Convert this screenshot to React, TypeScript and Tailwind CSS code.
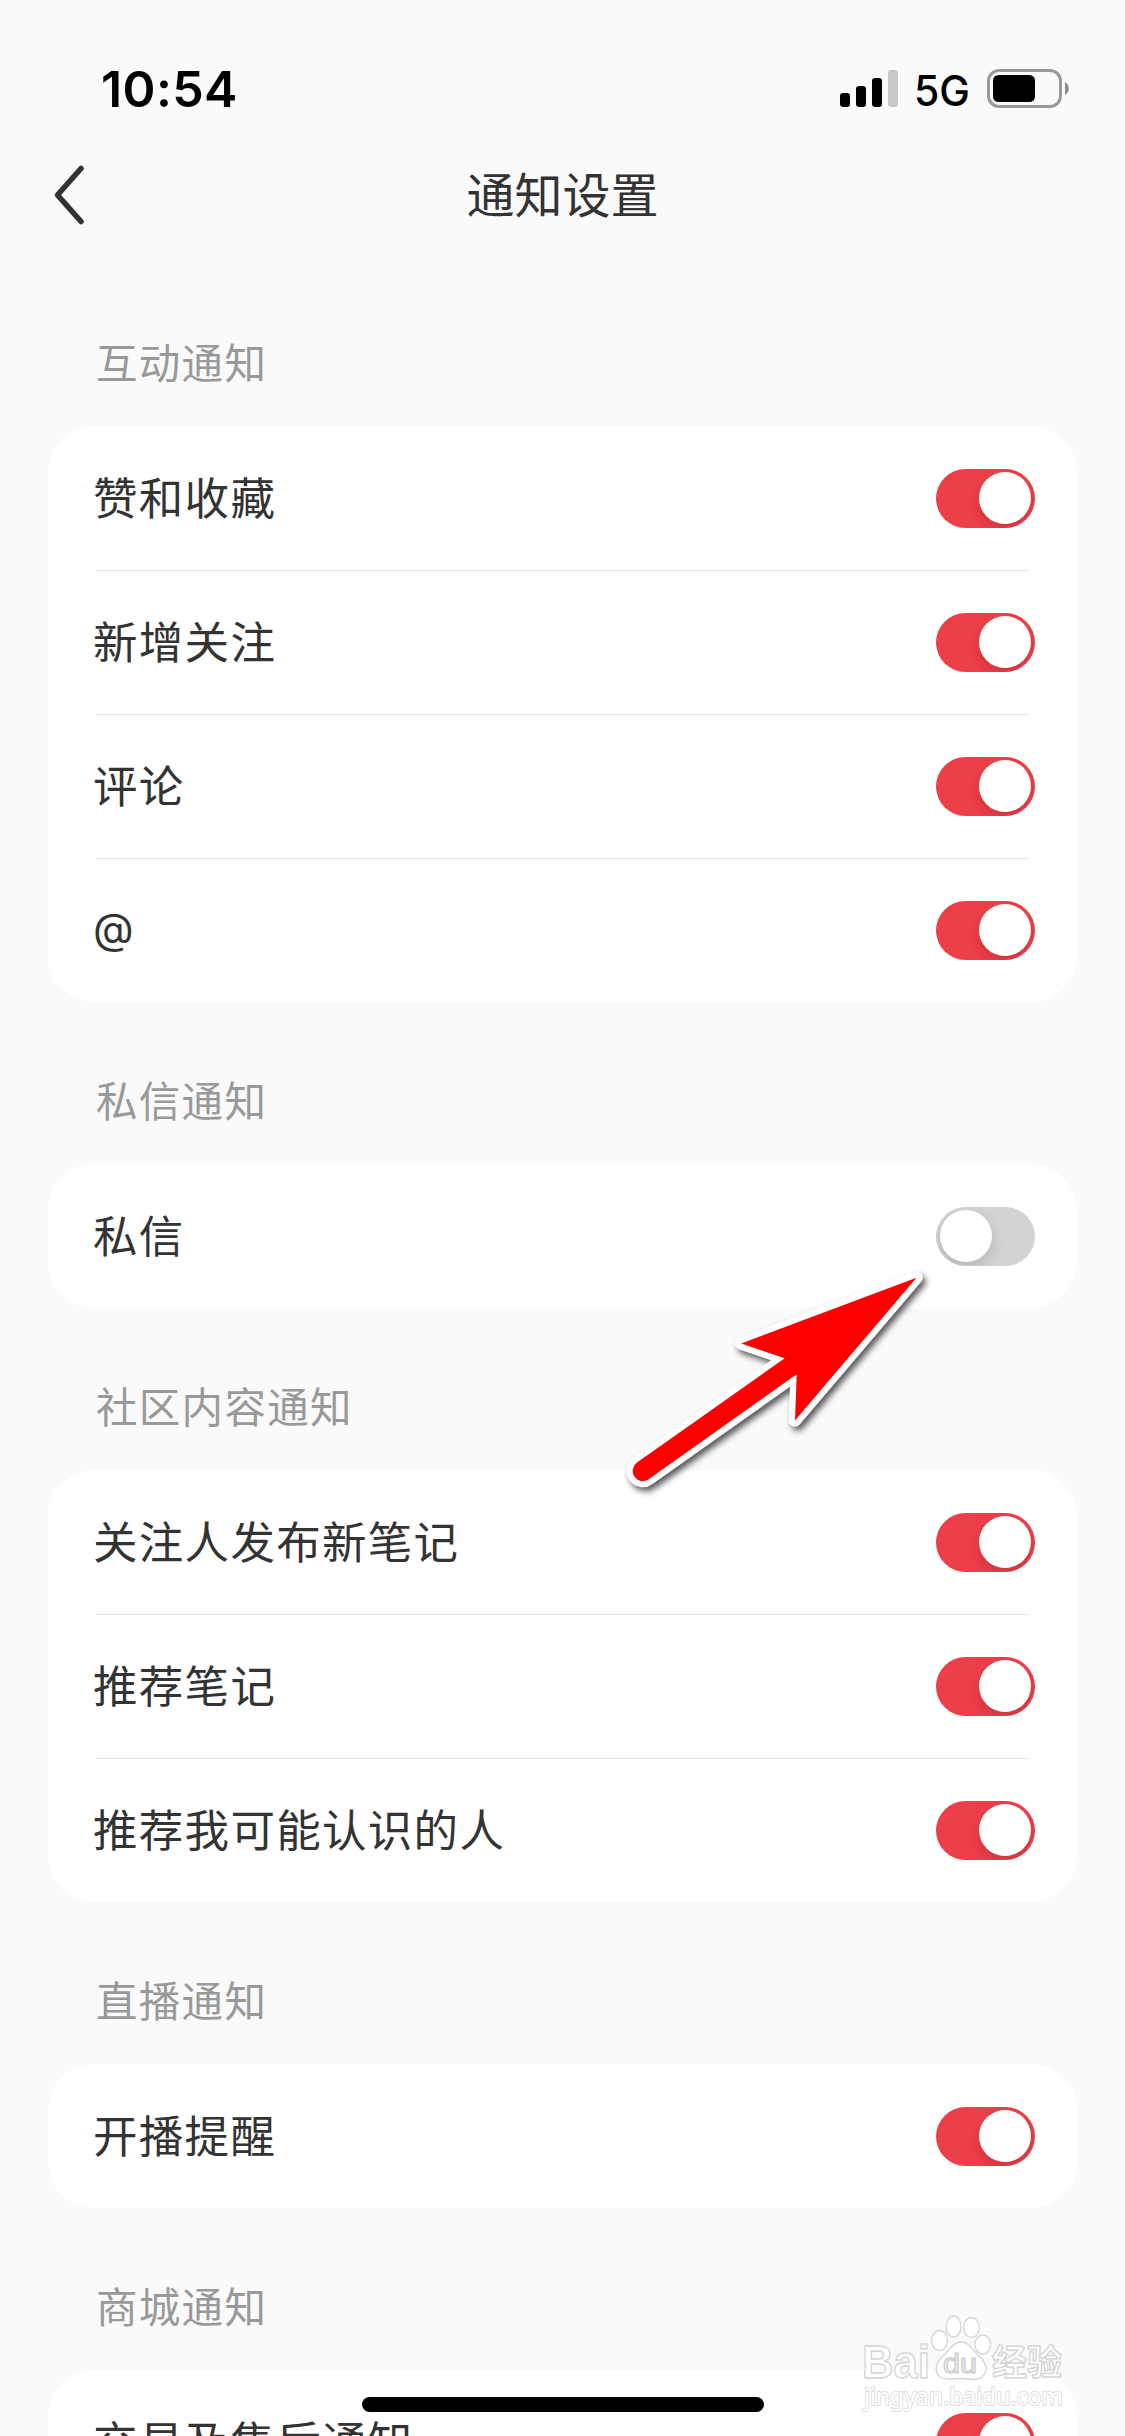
type Item = { label: string; on: boolean };
type Section = { title: string; items: Item[] };

const sections: Section[] = [
  {
    title: "互动通知",
    items: [
      { label: "赞和收藏", on: true },
      { label: "新增关注", on: true },
      { label: "评论", on: true },
      { label: "@", on: true },
    ],
  },
  { title: "私信通知", items: [{ label: "私信", on: false }] },
  {
    title: "社区内容通知",
    items: [
      { label: "关注人发布新笔记", on: true },
      { label: "推荐笔记", on: true },
      { label: "推荐我可能认识的人", on: true },
    ],
  },
  { title: "直播通知", items: [{ label: "开播提醒", on: true }] },
  { title: "商城通知", items: [{ label: "交易及售后通知", on: true }] },
];

function StatusBar() {
  return (
    <header className="flex h-[132px] items-start justify-between pl-[101px] pr-[54px] pt-[57px]">
      <span className="font-['Inter'] text-[50px] font-semibold leading-[64px] tracking-[0.4px] text-black">
        10:54
      </span>
      <div className="flex items-start pt-[12px]">
        <svg width="58" height="39" viewBox="0 0 58 39" className="mr-[14px]">
          <rect x="0" y="24" width="10" height="14" rx="3.2" fill="#000" />
          <rect x="16" y="17" width="10" height="21" rx="3.2" fill="#000" />
          <rect x="32" y="9" width="10" height="29" rx="3.2" fill="#000" />
          <rect x="48" y="1" width="10" height="37" rx="3.2" fill="#c8c8c8" />
        </svg>
        <svg width="60" height="39" viewBox="-3 0 60 39" className="mr-[15px] overflow-visible">
          <text
            x="-1"
            y="36.500"
            fontFamily="Inter, sans-serif"
            fontSize="42"
            fontWeight="500"
            textLength="56"
            lengthAdjust="spacingAndGlyphs"
          >
            5G
          </text>
        </svg>
        <svg width="84" height="39" viewBox="0 0 84 39">
          <rect x="1.5" y="1.5" width="72" height="36" rx="10.5" fill="none" stroke="#999" strokeWidth="3" />
          <rect x="6" y="6" width="42" height="27" rx="5.5" fill="#000" />
          <path d="M78 13C83 16 83 23 78 26Z" fill="#8a8a8a" />
        </svg>
      </div>
    </header>
  );
}

function NavBar() {
  return (
    <nav className="grid h-[126px] grid-cols-[1fr_auto_1fr] items-center">
      <svg width="40" height="70" viewBox="0 0 40 70" className="ml-[50px]">
        <path
          d="M31 8.5L7.5 35L31 61.5"
          fill="none"
          stroke="#333"
          strokeWidth="5.6"
          strokeLinecap="round"
          strokeLinejoin="round"
        />
      </svg>
      <h1 className="pb-[6px] text-[48px] leading-[72px] text-[#333]">通知设置</h1>
    </nav>
  );
}

function Toggle({ on }: { on: boolean }) {
  return (
    <span
      className={
        on
          ? "flex h-[59px] w-[99px] items-center justify-end overflow-hidden rounded-full bg-[#ec3f49] px-[4px]"
          : "flex h-[59px] w-[99px] items-center justify-start overflow-hidden rounded-full bg-[#d3d3d3] px-[4px]"
      }
    >
      <span className="size-[52px] rounded-full bg-white shadow-[0_6px_14px_rgba(0,0,0,0.14)]" />
    </span>
  );
}

function Row({ item, divided }: { item: Item; divided: boolean }) {
  return (
    <li className="flex h-[144px] flex-col">
      <div className={divided ? "ml-[48px] mr-[48px] h-px bg-[#e4e4e4]" : "ml-[48px] mr-[48px] h-px"} />
      <div className="flex flex-1 items-center justify-between pb-px pl-[45px] pr-[42px]">
        {item.label === "@" ? (
          <span className="pb-[2px] font-['Inter'] text-[42px] leading-[64px] text-[#333]">{item.label}</span>
        ) : (
          <span className="pb-[4px] text-[44.5px] leading-[64px] tracking-[1.3px] text-[#333]">{item.label}</span>
        )}
        <Toggle on={item.on} />
      </div>
    </li>
  );
}

function SettingsSection({ section }: { section: Section }) {
  return (
    <section>
      <h2 className="flex h-[162px] items-center pl-[96px] pt-[31px] text-[41.5px] leading-[60px] tracking-[1.3px] text-[#999]">
        {section.title}
      </h2>
      <ul className="mx-[48px] rounded-[46px] bg-white">
        {section.items.map((item, i) => (
          <Row key={item.label} item={item} divided={i > 0} />
        ))}
      </ul>
    </section>
  );
}

function PointerArrow() {
  return (
    <svg
      className="absolute left-[610px] top-[1250px] drop-shadow-[3px_4px_3px_rgba(0,0,0,0.65)]"
      width="340"
      height="260"
      viewBox="610 1250 340 260"
    >
      <path
        d="M916.5 1277.7L741.3 1343.5L784.7 1358.3L637 1462.6A9.9 9.9 0 0 0 648.7 1479.2L796.7 1374.3L795 1420.5Z"
        fill="#f00"
        stroke="#fff"
        strokeWidth="12.5"
        strokeLinejoin="round"
        paintOrder="stroke"
      />
    </svg>
  );
}

function Watermark() {
  return (
    <svg
      className="absolute left-[855px] top-[2305px]"
      width="220"
      height="115"
      viewBox="855 2305 220 115"
      fill="#fff"
      stroke="#d6d6d6"
      strokeWidth="1.4"
      strokeLinejoin="round"
    >
      <text
        x="862"
        y="2378"
        fontSize="46"
        fontFamily="'Liberation Sans', sans-serif"
        fontWeight="700"
        textLength="68"
        lengthAdjust="spacingAndGlyphs"
      >
        Bai
      </text>
      <ellipse cx="939.5" cy="2340.5" rx="8" ry="10" />
      <ellipse cx="953.5" cy="2326.5" rx="7.5" ry="10.5" />
      <ellipse cx="971.5" cy="2327.5" rx="7.8" ry="10" />
      <ellipse cx="982.8" cy="2344.5" rx="7.8" ry="9.5" />
      <path d="M961 2342C953 2342 950 2350 943 2356C935 2363 934 2372 940 2377C946 2381 953 2378 961 2378.5C969 2378 976 2382 982 2377C989 2371 986 2362 979 2356C972 2350 969 2342 961 2342Z" />
      <text
        x="943"
        y="2373"
        fontSize="28"
        fontFamily="'Liberation Sans', sans-serif"
        textLength="34"
        lengthAdjust="spacingAndGlyphs"
        fill="#f4f4f4"
        stroke="#cfcfcf"
      >
        du
      </text>
      <text
        x="992"
        y="2375"
        fontSize="35"
        fontFamily="'Noto Sans CJK SC', sans-serif"
        fontWeight="700"
        textLength="70"
        lengthAdjust="spacingAndGlyphs"
      >
        经验
      </text>
      <text
        x="864"
        y="2405"
        fontSize="24"
        fontFamily="'Noto Sans', sans-serif"
        textLength="199"
        lengthAdjust="spacingAndGlyphs"
        stroke="#dedede"
        strokeWidth="2"
        paintOrder="stroke"
      >
        jingyan.baidu.com
      </text>
    </svg>
  );
}

export default function App() {
  return (
    <main className="relative h-[2436px] w-[1125px] overflow-hidden bg-[#fafafa] font-['Noto_Sans_CJK_SC','Noto_Sans',sans-serif]">
      <StatusBar />
      <NavBar />
      <div className="pt-[6px]">
        {sections.map((section) => (
          <SettingsSection key={section.title} section={section} />
        ))}
      </div>
      <PointerArrow />
      <Watermark />
      <div className="absolute left-[362px] top-[2397px] h-[15px] w-[402px] rounded-full bg-black" />
    </main>
  );
}
